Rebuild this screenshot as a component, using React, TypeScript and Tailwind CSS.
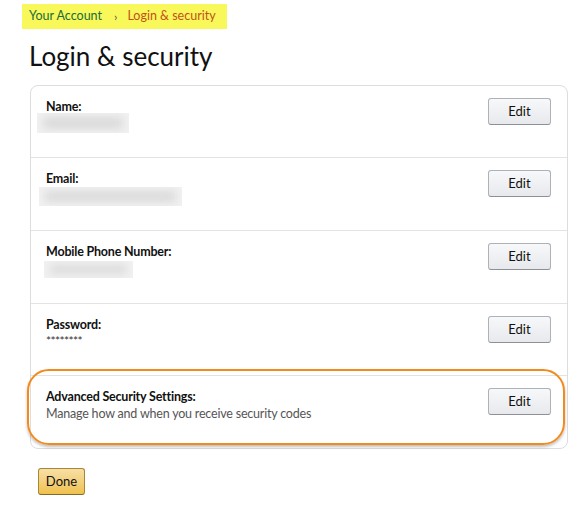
import React from "react";

function Blur({ w, h, ml, mt }: { w: number; h: number; ml: number; mt: number }) {
  return (
    <div
      className="relative overflow-hidden bg-[#f2f2f2]"
      style={{ width: w, height: h, marginLeft: ml, marginTop: mt }}
    >
      <div className="absolute inset-x-[6px] inset-y-[4px] bg-[#d9d9d9] blur-[5px]" />
    </div>
  );
}

function EditButton() {
  return (
    <button className="w-[63px] h-[27px] shrink-0 rounded-[3px] border border-[#adb1b8] border-b-[#8d9096] bg-gradient-to-b from-[#f7f8fa] to-[#e7e9ec] text-[13px] leading-[25px] text-[#111] font-['Lato',sans-serif]">
      Edit
    </button>
  );
}

function Row({
  label,
  h,
  children,
  last,
}: {
  label: string;
  h: number;
  children?: React.ReactNode;
  last?: boolean;
}) {
  return (
    <div
      className={"flex items-start justify-between pl-[15px] pr-[16px] pt-[12px] " + (last ? "" : "border-b border-[#e3e3e3]")}
      style={{ height: h + (last ? 0 : 1) }}
    >
      <div className="flex flex-col">
        <div className="text-[12.5px] leading-[17px] tracking-[-0.2px] font-bold text-[#111]">{label}</div>
        {children}
      </div>
      <EditButton />
    </div>
  );
}

export default function App() {
  return (
    <div className="relative w-[586px] h-[507px] bg-white font-['Lato',sans-serif] text-[#111]">
      <div className="pt-[4px] pl-[22px]">
        <div className="flex items-center w-[205px] h-[25px] bg-[#f8f85a] pl-[7px] text-[12.5px]">
          <span className="text-[#216b3c]">Your Account</span>
          <span className="ml-[12px] text-[#555] text-[12px]">›</span>
          <span className="ml-[10px] text-[#c2511c]">Login &amp; security</span>
        </div>
      </div>
      <h1 className="ml-[29px] mt-[11px] text-[26px] leading-[33px] font-normal text-[#111]">
        Login &amp; security
      </h1>
      <div className="ml-[30px] mt-[12px] w-[538px] border border-[#dddddd] rounded-[8px]">
        <Row label="Name:" h={71}>
          <Blur w={92} h={20} ml={-9} mt={-2} />
        </Row>
        <Row label="Email:" h={72}>
          <Blur w={143} h={19} ml={-7} mt={0} />
        </Row>
        <Row label="Mobile Phone Number:" h={72}>
          <Blur w={89} h={17} ml={-2} mt={1} />
        </Row>
        <Row label="Password:" h={71}>
          <div className="text-[12px] leading-[14px] text-[#333] mt-[1px] tracking-[-0.6px]">********</div>
        </Row>
        <Row label="Advanced Security Settings:" h={72} last>
          <div className="text-[12.5px] leading-[18px] tracking-[-0.2px] text-[#555]">
            Manage how and when you receive security codes
          </div>
        </Row>
      </div>
      <button className="ml-[38px] mt-[19px] w-[47px] h-[27px] rounded-[3px] border border-[#a88734] border-b-[#846a29] bg-gradient-to-b from-[#f7dfa5] to-[#f0c14b] text-[13px] leading-[25px] text-[#111]">
        Done
      </button>
      <div className="absolute left-[27px] top-[369px] w-[538px] h-[76px] rounded-[22px] border-2 border-[#f28a1e] shadow-[0_2px_3px_rgba(0,0,0,0.25)] pointer-events-none" />
    </div>
  );
}
